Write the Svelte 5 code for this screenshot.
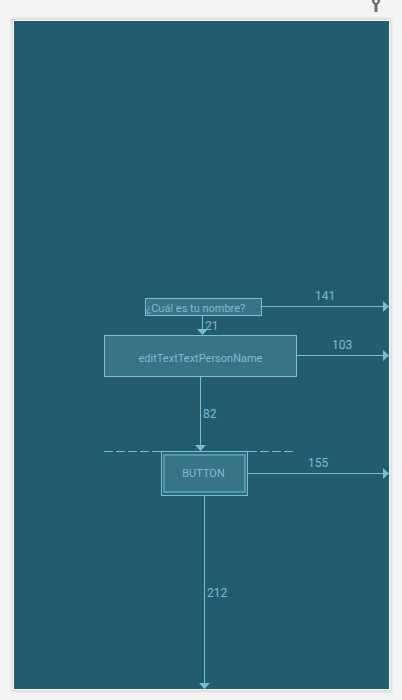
<script>
  const horizontal = [
    { value: 141, left: 248, top: 280, text: 53 },
    { value: 103, left: 283, top: 329, text: 35 },
    { value: 155, left: 234, top: 447, text: 60 },
  ];
  const vertical = [
    { value: 21, left: 183, top: 295, height: 19, text: 3 },
    { value: 82, left: 181, top: 356, height: 74, text: 30 },
    { value: 212, left: 185, top: 475, height: null, text: 90 },
  ];
</script>

<main>
  <header>
    <svg width="10" height="12" viewBox="0 0 10 12" aria-hidden="true">
      <path d="M1 0V2L3.5 5V11.5Q5 12.5 6.5 11.5V5L9 2V0H6.5V2L5 3L3.5 2V0z" />
    </svg>
  </header>

  <section class="blueprint" aria-label="Blueprint">
    <div class="baseline"></div>
    <label class="widget caption" for="person">¿Cuál es tu nombre?</label>
    <input class="widget field" id="person" value="editTextTextPersonName" readonly />
    <button class="widget action" type="button"><span>BUTTON</span></button>

    {#each horizontal as c}
      <div class="across" style:left="{c.left}px" style:top="{c.top}px">
        <span style:left="{c.text}px">{c.value}</span>
        <svg width="6" height="11" viewBox="0 0 6 11" aria-hidden="true"><path d="M0 0L6 5.5L0 11z" /></svg>
      </div>
    {/each}
    {#each vertical as c}
      <div
        class="down"
        style:left="{c.left}px"
        style:top="{c.top}px"
        style:height={c.height === null ? null : `${c.height}px`}
        style:bottom={c.height === null ? '0' : null}
      >
        <span style:top="{c.text}px">{c.value}</span>
        <svg width="11" height="6" viewBox="0 0 11 6" aria-hidden="true"><path d="M0 0H11L5.5 6z" /></svg>
      </div>
    {/each}
  </section>
</main>

<style>
  :global(body) {
    margin: 0;
    background: #f4f4f4;
  }
  main {
    box-sizing: border-box;
    min-height: 100vh;
    padding: 0 12px 10px 13px;
    display: flex;
    flex-direction: column;
    font-family: Roboto, "Liberation Sans", sans-serif;
    color: #78bdd1;
  }
  header {
    height: 20px;
    display: flex;
    justify-content: flex-end;
    padding-right: 9px;
  }
  header svg {
    display: block;
  }
  .blueprint {
    position: relative;
    flex: 1;
    min-height: 600px;
    border: 1px solid #f2ffff;
    background: #235c6f;
    box-shadow: 0 0 0 1px #dcdede, 0 0 2px 2px #dedede;
  }
  .widget {
    position: absolute;
    box-sizing: border-box;
    margin: 0;
    padding: 0;
    border: 1px solid #78c0d5;
    border-radius: 0;
    background: #397387;
    color: #78bdd1;
    font: 11px/18px Roboto, "Liberation Sans", sans-serif;
    outline: none;
  }
  .caption {
    left: 131px;
    top: 277px;
    width: 117px;
    height: 18px;
    padding-top: 1px;
    line-height: 17px;
    white-space: nowrap;
  }
  .field {
    left: 90px;
    top: 314px;
    width: 193px;
    height: 42px;
    padding-top: 4px;
    text-align: center;
  }
  .action {
    left: 147px;
    top: 430px;
    width: 87px;
    height: 45px;
    padding: 2px 1px;
    background: #2b6579;
    display: flex;
  }
  .action span {
    flex: 1;
    display: flex;
    align-items: center;
    justify-content: center;
    align-self: stretch;
    padding-right: 2px;
    border: 2px solid #5398ad;
    border-radius: 1px;
    background: #397387;
  }
  .baseline {
    position: absolute;
    left: 90px;
    top: 430px;
    width: 189px;
    height: 1px;
    background: repeating-linear-gradient(90deg, #78bdd1 0 9px, transparent 9px 12px);
  }
  .across,
  .down {
    position: absolute;
    font-size: 12px;
    line-height: 14px;
  }
  .across {
    right: 0;
    height: 11px;
    background: linear-gradient(#78bdd1, #78bdd1) 0 5px / 100% 1px no-repeat;
  }
  .down {
    width: 11px;
    background: linear-gradient(#78bdd1, #78bdd1) 5px 0 / 1px 100% no-repeat;
  }
  .across span,
  .down span,
  .across svg,
  .down svg {
    position: absolute;
  }
  .across span {
    bottom: 9px;
  }
  .down span {
    left: 8px;
  }
  .across svg {
    right: 0;
    top: 0;
  }
  .down svg {
    left: 0;
    bottom: 0;
  }
  path {
    fill: #78bdd1;
  }
  header path {
    fill: #6e6e6e;
  }
</style>
